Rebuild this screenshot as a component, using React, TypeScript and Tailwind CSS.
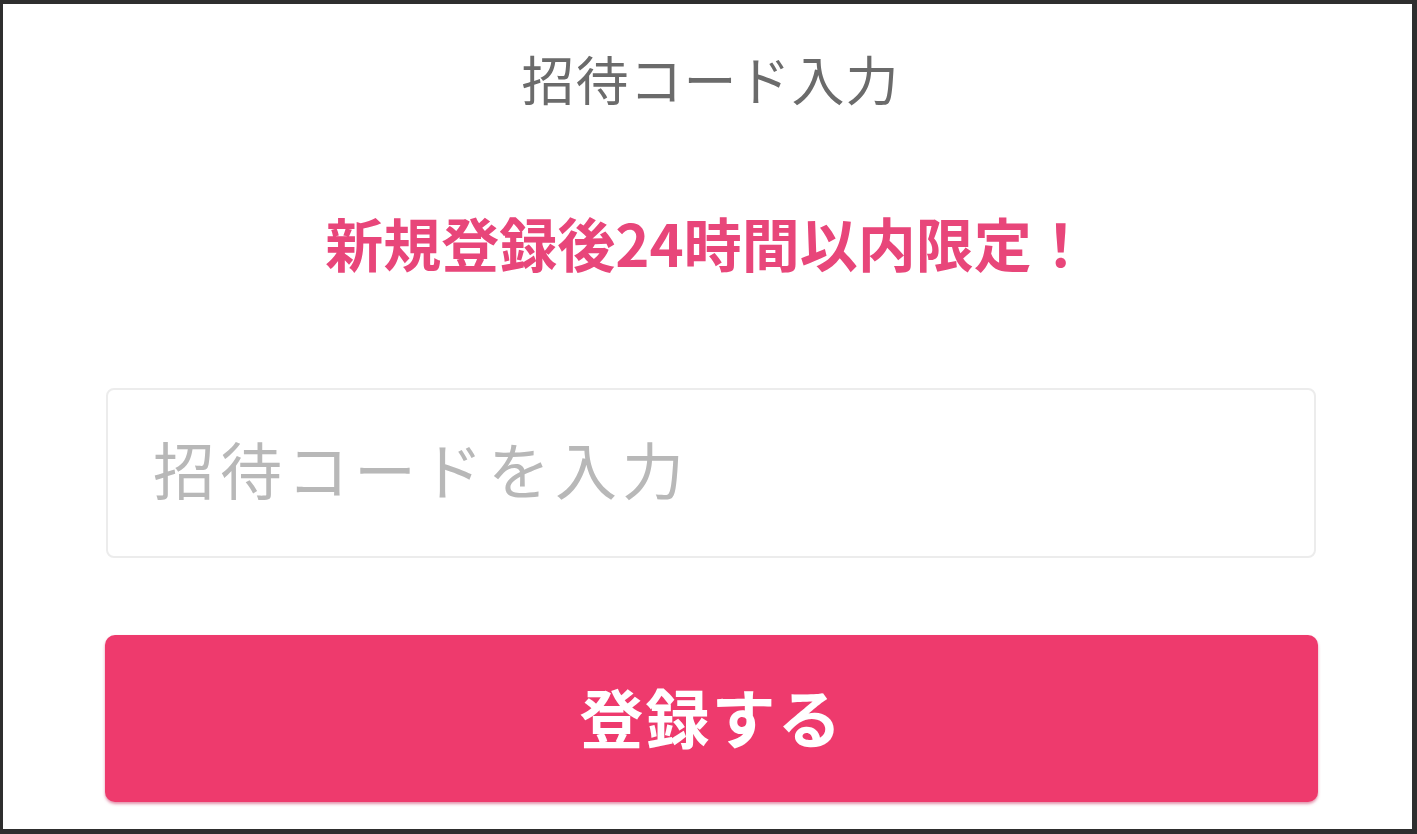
import React from "react";

export default function App() {
  const jp = { fontFamily: '"Noto Sans CJK JP", "Noto Sans", sans-serif' };
  return (
    <div
      className="w-[1417px] h-[834px] bg-white border-t-4 border-l-[3px] border-r-[5px] border-b-[5px] border-[#2e2e2e] flex flex-col"
      style={jp}
    >
      <div className="pt-[48px] pl-[6px] text-center text-[53px] leading-none text-[#6b6b6b] tracking-[1px]">
        招待コード入力
      </div>
      <div className="mt-[108px] text-center text-[58px] leading-none font-bold text-[#e8467a]">
        新規登録後24時間以内限定！
      </div>
      <div className="mt-[117px] ml-[103px] w-[1210px] h-[170px] rounded-[8px] border-2 border-[#ececec] flex items-center pl-[45px] pb-[10px]">
        <span className="text-[62px] leading-none text-[#b8b8b8] tracking-[5px]">招待コードを入力</span>
      </div>
      <div className="mt-[77px] ml-[102px] w-[1213px] h-[167px] rounded-[10px] bg-[#ee3a6d] shadow-[0_2px_3px_rgba(200,40,90,0.5)] flex items-center justify-center pb-[8px]">
        <span className="text-[64px] leading-none font-bold text-white tracking-[2px]">登録する</span>
      </div>
    </div>
  );
}
